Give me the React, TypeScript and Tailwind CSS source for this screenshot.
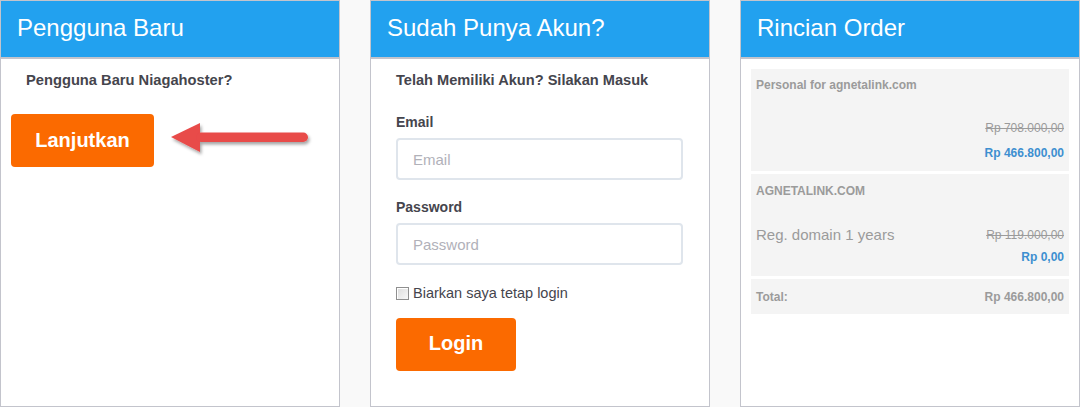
import React from "react";

function Header({ title }: { title: string }) {
  return (
    <div className="h-[58px] shrink-0 bg-[#22a1ef] border-b-2 border-[#c3c4cc] pl-[16px] pt-[13px]">
      <div className="text-[24px] leading-[27px] text-white">{title}</div>
    </div>
  );
}

function Arrow() {
  return (
    <svg className="absolute left-[165px] top-[116px]" width="150" height="44" viewBox="0 0 150 44">
      <defs>
        <filter id="sh" x="-10%" y="-30%" width="130%" height="180%">
          <feDropShadow dx="1.5" dy="2.5" stdDeviation="1.6" floodColor="#000" floodOpacity="0.35" />
        </filter>
      </defs>
      <g filter="url(#sh)" fill="#e84b4a">
        <polygon points="5,20 34,6 34,35" />
        <rect x="30" y="15.5" width="112" height="9.5" rx="4.75" />
      </g>
    </svg>
  );
}

function Panel1() {
  return (
    <div className="relative w-[340px] h-[407px] shrink-0 border border-[#c3c4cc] bg-white flex flex-col">
      <Header title="Pengguna Baru" />
      <div className="pl-[25px] mt-[13px] text-[14.7px] leading-[16px] font-bold text-[#45454d]">
        Pengguna Baru Niagahoster?
      </div>
      <div className="ml-[10px] mt-[26px] w-[143px] h-[53px] rounded-[4px] bg-[#fb6a00] flex items-center justify-center pb-[1px] text-white font-bold text-[20px]">
        Lanjutkan
      </div>
      <Arrow />
    </div>
  );
}

function Input({ placeholder }: { placeholder: string }) {
  return (
    <div className="ml-[25px] w-[287px] h-[42px] rounded-[4px] border-2 border-[#dfe5ec] flex items-center pl-[15px] pt-[2px] text-[15px] text-[#b1b1b9]">
      {placeholder}
    </div>
  );
}

function Panel2() {
  return (
    <div className="w-[340px] h-[407px] shrink-0 border border-[#c3c4cc] bg-white flex flex-col">
      <Header title="Sudah Punya Akun?" />
      <div className="pl-[25px] mt-[13px] text-[14.6px] leading-[16px] font-bold text-[#45454d]">
        Telah Memiliki Akun? Silakan Masuk
      </div>
      <div className="pl-[25px] mt-[26px] text-[14px] leading-[16px] font-bold text-[#45454d]">Email</div>
      <div className="mt-[8px]">
        <Input placeholder="Email" />
      </div>
      <div className="pl-[25px] mt-[19px] text-[14px] leading-[16px] font-bold text-[#45454d]">Password</div>
      <div className="mt-[8px]">
        <Input placeholder="Password" />
      </div>
      <div className="pl-[25px] mt-[20px] flex items-center h-[16px]">
        <span className="w-[13px] h-[13px] border border-[#8f8f8f] bg-gradient-to-br from-[#dcdcdc] to-[#f8f8f8] shadow-[inset_1px_1px_0_#fff]" />
        <span className="ml-[4px] text-[14.5px] leading-[16px] text-[#45454d]">Biarkan saya tetap login</span>
      </div>
      <div className="ml-[25px] mt-[17px] w-[120px] h-[53px] rounded-[4px] bg-[#fb6a00] flex items-center justify-center pb-[3px] text-white font-bold text-[20px]">
        Login
      </div>
    </div>
  );
}

function Panel3() {
  return (
    <div className="w-[340px] h-[407px] shrink-0 border border-[#c3c4cc] bg-white flex flex-col">
      <Header title="Rincian Order" />
      <div className="px-[10px] pt-[10px] flex flex-col gap-[3px] text-[12px] leading-[14px] text-[#9b9b9b]">
        <div className="h-[102px] bg-[#f4f4f4] pl-[5px] pr-[5px] pt-[9px] flex flex-col">
          <div className="font-bold">Personal for agnetalink.com</div>
          <div className="mt-[29px] text-right line-through">Rp 708.000,00</div>
          <div className="mt-[11px] text-right font-bold text-[#3d8fd0]">Rp 466.800,00</div>
        </div>
        <div className="h-[102px] bg-[#f4f4f4] pl-[5px] pr-[5px] pt-[10px] flex flex-col">
          <div className="font-bold">AGNETALINK.COM</div>
          <div className="mt-[28px] flex items-center justify-between h-[18px]">
            <span className="text-[15px] leading-[18px]">Reg. domain 1 years</span>
            <span className="line-through">Rp 119.000,00</span>
          </div>
          <div className="mt-[6px] text-right font-bold text-[#3d8fd0]">Rp 0,00</div>
        </div>
        <div className="h-[35px] bg-[#f4f4f4] pl-[5px] pr-[5px] flex items-center justify-between font-bold">
          <span>Total:</span>
          <span>Rp 466.800,00</span>
        </div>
      </div>
    </div>
  );
}

export default function App() {
  return (
    <div className="w-[1080px] h-[407px] bg-[#f9f9f9] flex gap-[30px] font-['Liberation_Sans',Arial,sans-serif] overflow-hidden">
      <Panel1 />
      <Panel2 />
      <Panel3 />
    </div>
  );
}
